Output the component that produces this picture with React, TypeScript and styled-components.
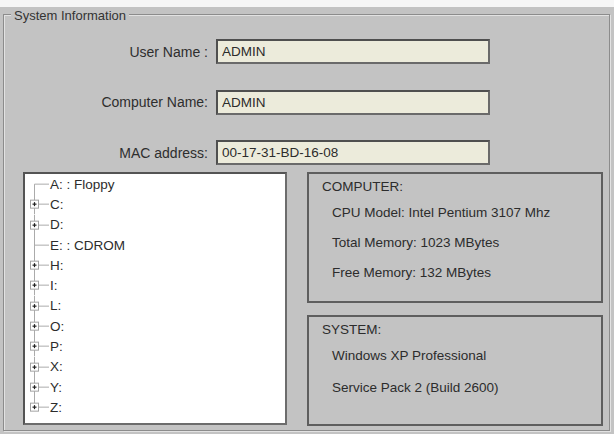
import React from 'react';
import styled, { createGlobalStyle } from 'styled-components';

const GlobalStyle = createGlobalStyle`
  html, body {
    margin: 0;
    padding: 0;
    background: #f6f6f6;
  }
  body {
    font-family: "Liberation Sans", Arial, sans-serif;
    color: #2c2c2c;
  }
`;

const Window = styled.div`
  margin-top: 7px;
  height: 427px;
  box-sizing: border-box;
  padding: 7px 0 0 3px;
  background: #c3c3c3;
  overflow: hidden;
`;

const Group = styled.section`
  width: 607px;
  box-sizing: border-box;
  padding-bottom: 4px;
  border: 1px solid #8c8c8c;
  box-shadow: inset 1px 1px 0 #e2e2e2, 1px 1px 0 #e2e2e2;
`;

const Title = styled.h2`
  width: fit-content;
  margin: -7px 0 0 7px;
  padding: 0 3px;
  background: #c3c3c3;
  font-size: 13px;
  font-weight: normal;
  line-height: 16px;
  color: #333;
`;

const Fields = styled.div`
  display: flex;
  flex-direction: column;
  gap: 25.5px;
  padding-top: 15px;
`;

const FieldRow = styled.label`
  display: grid;
  grid-template-columns: 204px 274px;
  column-gap: 8px;
  align-items: center;
`;

const FieldLabel = styled.span`
  text-align: right;
  font-size: 14px;
  color: #2e2e2e;
`;

const Input = styled.input`
  height: 25px;
  box-sizing: border-box;
  margin: 0;
  padding: 0 4px;
  border: 2px solid #6a6a6a;
  border-top-color: #4f4f4f;
  border-left-color: #4f4f4f;
  background: #ecebdb;
  font-family: inherit;
  font-size: 13.5px;
  color: #2c2c2c;
  outline: none;
`;

const Panels = styled.div`
  display: flex;
  gap: 20px;
  margin-top: 7px;
  padding-left: 19px;
`;

const Tree = styled.ul`
  width: 264px;
  height: 253px;
  box-sizing: border-box;
  margin: 0;
  padding: 0;
  list-style: none;
  background: #fff;
  border: 2px solid #6c6c6c;
  border-top-color: #545454;
  border-left-color: #545454;
`;

const TreeRow = styled.li`
  display: flex;
  align-items: center;
  height: 20.3px;
  padding-left: 3px;
  font-size: 13.5px;
  color: #2c2c2c;
  white-space: nowrap;
`;

const RightCol = styled.div`
  display: flex;
  flex-direction: column;
  gap: 12px;
  width: 296px;
`;

const InfoBox = styled.div<{ $height: number }>`
  height: ${(p) => p.$height}px;
  box-sizing: border-box;
  padding: 3px 0 0 13px;
  border: 2px solid #5e5e5e;
`;

const InfoTitle = styled.div`
  font-size: 13.5px;
  line-height: 20px;
  color: #2c2c2c;
`;

const InfoList = styled.div<{ $gap: number }>`
  display: flex;
  flex-direction: column;
  gap: ${(p) => p.$gap}px;
  margin-top: 6px;
  padding-left: 10px;
`;

const InfoItem = styled.div`
  font-size: 13.5px;
  line-height: 20px;
  color: #2c2c2c;
`;

const ROW_H = 20.3;

const Connector: React.FC<{ expandable: boolean; first: boolean; last: boolean }> = ({
  expandable,
  first,
  last,
}) => {
  const c = ROW_H / 2;
  return (
    <svg width={22} height={ROW_H} style={{ flex: 'none' }}>
      <line
        x1={6.5}
        x2={6.5}
        y1={first ? c : 0}
        y2={last ? c : ROW_H}
        stroke="#ababab"
        strokeWidth={1}
      />
      <line x1={expandable ? 10.5 : 6.5} x2={21} y1={c} y2={c} stroke="#ababab" strokeWidth={1} />
      {expandable && (
        <g>
          <rect x={2.5} y={c - 4} width={8} height={8} fill="#fff" stroke="#a3a3a3" strokeWidth={1} />
          <line x1={4.5} x2={8.5} y1={c} y2={c} stroke="#222" strokeWidth={1.2} />
          <line x1={6.5} x2={6.5} y1={c - 2} y2={c + 2} stroke="#222" strokeWidth={1.2} />
        </g>
      )}
    </svg>
  );
};

const drives = [
  { label: 'A: : Floppy', expandable: false },
  { label: 'C:', expandable: true },
  { label: 'D:', expandable: true },
  { label: 'E: : CDROM', expandable: false },
  { label: 'H:', expandable: true },
  { label: 'I:', expandable: true },
  { label: 'L:', expandable: true },
  { label: 'O:', expandable: true },
  { label: 'P:', expandable: true },
  { label: 'X:', expandable: true },
  { label: 'Y:', expandable: true },
  { label: 'Z:', expandable: true },
];

const App: React.FC = () => {
  return (
    <>
      <GlobalStyle />
      <Window>
        <Group>
          <Title>System Information</Title>
          <Fields>
            <FieldRow>
              <FieldLabel>User Name :</FieldLabel>
              <Input defaultValue="ADMIN" />
            </FieldRow>
            <FieldRow>
              <FieldLabel>Computer Name:</FieldLabel>
              <Input defaultValue="ADMIN" />
            </FieldRow>
            <FieldRow>
              <FieldLabel>MAC address:</FieldLabel>
              <Input defaultValue="00-17-31-BD-16-08" />
            </FieldRow>
          </Fields>
          <Panels>
            <Tree>
              {drives.map((d, i) => (
                <TreeRow key={d.label}>
                  <Connector
                    expandable={d.expandable}
                    first={i === 0}
                    last={i === drives.length - 1}
                  />
                  {d.label}
                </TreeRow>
              ))}
            </Tree>
            <RightCol>
              <InfoBox $height={131}>
                <InfoTitle>COMPUTER:</InfoTitle>
                <InfoList $gap={10}>
                  <InfoItem>CPU Model: Intel Pentium 3107 Mhz</InfoItem>
                  <InfoItem>Total Memory: 1023 MBytes</InfoItem>
                  <InfoItem>Free Memory: 132 MBytes</InfoItem>
                </InfoList>
              </InfoBox>
              <InfoBox $height={111}>
                <InfoTitle>SYSTEM:</InfoTitle>
                <InfoList $gap={12}>
                  <InfoItem>Windows XP Professional</InfoItem>
                  <InfoItem>Service Pack 2 (Build 2600)</InfoItem>
                </InfoList>
              </InfoBox>
            </RightCol>
          </Panels>
        </Group>
      </Window>
    </>
  );
};

export default App;
